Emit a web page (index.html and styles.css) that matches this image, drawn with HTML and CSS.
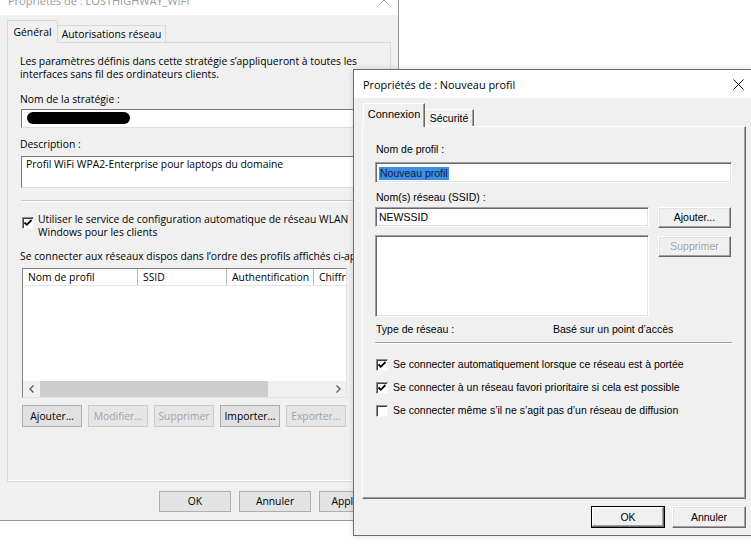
FILE: index.html
```html
<!DOCTYPE html>
<html lang="fr">
<head>
<meta charset="utf-8">
<title>Propriétés</title>
<link rel="stylesheet" href="styles.css">
</head>
<body>
<div class="desktop">
  <section class="win win1">
    <header class="titlebar tb1">
      <span class="title">Propriétés de : LOSTHIGHWAY_WIFI</span>
      <span class="close"><svg width="10" height="10" viewBox="0 0 10 10"><path d="M0.5 0.5 L9.5 9.5 M9.5 0.5 L0.5 9.5" stroke="#9a9a9a" stroke-width="1" fill="none"/></svg></span>
    </header>
    <div class="wbody b1">
      <div class="tabs t1">
        <div class="tab sel w-gen">Général</div>
        <div class="tab w-aut">Autorisations réseau</div>
      </div>
      <div class="panel p1">
        <p class="intro">Les paramètres définis dans cette stratégie s’appliqueront à toutes les<br>interfaces sans fil des ordinateurs clients.</p>
        <div class="lbl l-name">Nom de la stratégie :</div>
        <div class="field1 f-name"><span class="redact"></span></div>
        <div class="lbl l-desc">Description :</div>
        <div class="field1 f-desc">Profil WiFi WPA2-Enterprise pour laptops du domaine</div>
        <div class="sep sep1"></div>
        <div class="chkrow1">
          <span class="cb cb1"><svg width="10" height="10" viewBox="0 0 10 10"><path d="M1.5 4.5 L3.8 6.8 L8.5 2" stroke="#000" stroke-width="1.8" fill="none"/></svg></span>
          <span class="chktext">Utiliser le service de configuration automatique de réseau WLAN<br>Windows pour les clients</span>
        </div>
        <div class="lbl l-order">Se connecter aux réseaux dispos dans l’ordre des profils affichés ci-après :</div>
        <div class="listview">
          <div class="lvhead">
            <span class="col">Nom de profil</span>
            <span class="col">SSID</span>
            <span class="col">Authentification</span>
            <span class="col">Chiffrement</span>
          </div>
          <div class="lvbody"></div>
          <div class="hscroll">
            <span class="arr"><svg width="6" height="8" viewBox="0 0 6 8"><path d="M4.5 0.5 L1 4 L4.5 7.5" stroke="#606060" stroke-width="1.4" fill="none"/></svg></span>
            <span class="track"><span class="thumb"></span></span>
            <span class="arr"><svg width="6" height="8" viewBox="0 0 6 8"><path d="M1.5 0.5 L5 4 L1.5 7.5" stroke="#606060" stroke-width="1.4" fill="none"/></svg></span>
          </div>
        </div>
        <div class="btnrow">
          <span class="btn1">Ajouter…</span>
          <span class="btn1 dis">Modifier…</span>
          <span class="btn1 dis">Supprimer</span>
          <span class="btn1">Importer…</span>
          <span class="btn1 dis">Exporter…</span>
        </div>
      </div>
      <div class="footer f1">
        <span class="btn1 fb1">OK</span>
        <span class="btn1 fb1">Annuler</span>
        <span class="btn1 fb1">Appliquer</span>
      </div>
    </div>
  </section>

  <section class="win win2">
    <header class="titlebar tb2">
      <span class="title">Propriétés de : Nouveau profil</span>
      <span class="close close2"><svg width="11" height="11" viewBox="0 0 11 11"><path d="M0.5 0.5 L10.5 10.5 M10.5 0.5 L0.5 10.5" stroke="#000" stroke-width="1" fill="none"/></svg></span>
    </header>
    <div class="wbody b2">
      <div class="tabs t2">
        <div class="tab2 sel w-con">Connexion</div>
        <div class="tab2 w-sec">Sécurité</div>
      </div>
      <div class="panel p2">
        <div class="lbl2">Nom de profil :</div>
        <div class="field2 f-prof"><span class="hl">Nouveau profil</span></div>
        <div class="lbl2 l-ssid">Nom(s) réseau (SSID) :</div>
        <div class="row2 r-ssid">
          <div class="field2 f-ssid">NEWSSID</div>
          <span class="btn2">Ajouter...</span>
        </div>
        <div class="row2 r-list">
          <div class="field2 f-list"></div>
          <span class="btn2 dis2 b-sup">Supprimer</span>
        </div>
        <div class="typerow"><span class="tk">Type de réseau :</span><span>Basé sur un point d’accès</span></div>
        <div class="sep sep2"></div>
        <div class="chkrow2">
          <span class="cb cb2"><svg width="10" height="10" viewBox="0 0 10 10"><path d="M1.5 4.5 L3.8 6.8 L8.5 2" stroke="#000" stroke-width="1.8" fill="none"/></svg></span>
          <span>Se connecter automatiquement lorsque ce réseau est à portée</span>
        </div>
        <div class="chkrow2">
          <span class="cb cb2"><svg width="10" height="10" viewBox="0 0 10 10"><path d="M1.5 4.5 L3.8 6.8 L8.5 2" stroke="#000" stroke-width="1.8" fill="none"/></svg></span>
          <span>Se connecter à un réseau favori prioritaire si cela est possible</span>
        </div>
        <div class="chkrow2">
          <span class="cb cb2"></span>
          <span>Se connecter même s’il ne s’agit pas d’un réseau de diffusion</span>
        </div>
      </div>
      <div class="footer f2">
        <span class="btn2 def">OK</span>
        <span class="btn2">Annuler</span>
      </div>
    </div>
  </section>
</div>
</body>
</html>
```

FILE: styles.css
```css
html, body { margin: 0; padding: 0; background: #fff; }

.desktop {
  position: relative;
  width: 751px;
  height: 551px;
  overflow: hidden;
  background: #fff;
}

.win {
  position: absolute;
  box-sizing: border-box;
  display: flex;
  flex-direction: column;
  background: #f0f0f0;
  color: #000;
}

.titlebar {
  flex: none;
  display: flex;
  align-items: center;
  background: #fff;
}
.title { flex: 1; white-space: nowrap; }
.close { display: flex; align-items: center; justify-content: center; flex: none; }

.wbody { flex: 1; display: flex; flex-direction: column; min-height: 0; }

.tabs { flex: none; display: flex; align-items: flex-end; position: relative; z-index: 2; }

.panel { flex: 1; box-sizing: border-box; display: flex; flex-direction: column; min-height: 0; }

.footer { flex: none; display: flex; justify-content: flex-end; }

.sep { flex: none; height: 1px; }

.cb {
  flex: none;
  box-sizing: border-box;
  width: 12px;
  height: 12px;
  background: #fff;
  border: 1px solid;
  border-color: #8a8a8a #f4f4f4 #f4f4f4 #8a8a8a;
  box-shadow: inset 1px 1px 0 #404040;
  display: flex;
  align-items: center;
  justify-content: center;
}
.cb svg { display: block; }

/* ---------- Window 1 ---------- */
.win1 {
  left: -1px;
  top: -16px;
  width: 400px;
  height: 537px;
  border: 1px solid #9a9a9a;
  font: 10.35px/13px "Open Sans", "Noto Sans", sans-serif;
}
.tb1 { height: 30px; padding-left: 8px; }
.tb1 .title { color: #9a9a9a; font-size: 11px; }
.tb1 .close { width: 29px; }

.b1 { padding: 5px 7px 0 7px; }
.t1 { height: 22px; }
.tab {
  box-sizing: border-box;
  height: 17px;
  border: 1px solid #d9d9d9;
  border-bottom: none;
  background: #f0f0f0;
  display: flex;
  align-items: center;
  justify-content: center;
  white-space: nowrap;
}
.tab.sel { height: 23px; margin-bottom: -1px; background: #f0f0f0; }
.w-gen { width: 51px; }
.w-aut { width: 108px; border-left: none; }

.p1 {
  border: 1px solid #d9d9d9;
  box-shadow: inset 0 -1px 0 #fff;
  padding: 12px 12px 0 13px;
  overflow: hidden;
}
.intro { margin: 0 0 0 -1px; white-space: nowrap; }
.lbl { white-space: nowrap; margin-left: -1px; }
.l-name { margin-top: 12px; }
.l-desc { margin-top: 10px; }
.l-order { margin-top: 11px; }

.field1 {
  box-sizing: border-box;
  background: #fff;
  border: 1px solid;
  border-color: #7a7a7a #dcdcdc #dcdcdc #7a7a7a;
  margin-right: -20px;
  white-space: nowrap;
}
.f-name { margin-top: 3px; height: 19px; padding: 2px 0 0 5px; }
.redact { display: block; width: 103px; height: 12px; background: #000; border-radius: 6px; }
.f-desc { margin-top: 5px; height: 32px; padding: 1px 0 0 4px; }

.sep1 {
  margin-top: 12px;
  margin-right: -20px;
  background: #c9c9c9;
  box-shadow: 0 1px 0 #fff;
}

.chkrow1 { margin-top: 12px; display: flex; gap: 4px; margin-left: 1px; }
.cb1 { margin-top: 4px; }
.chktext { white-space: nowrap; }

.listview {
  flex: none;
  margin: 5px 0 0 1px;
  width: 325px;
  height: 130px;
  box-sizing: border-box;
  border: 1px solid;
  border-color: #828282 #e3e3e3 #e3e3e3 #828282;
  background: #fff;
  display: flex;
  flex-direction: column;
  overflow: hidden;
}
.lvhead {
  flex: none;
  height: 17px;
  display: grid;
  grid-template-columns: 115px 89px 87px 80px;
  border-bottom: 1px solid #e5e5e5;
  box-sizing: border-box;
}
.col {
  border-right: 1px solid #b8b8b8;
  padding-left: 5px;
  white-space: nowrap;
  overflow: hidden;
  line-height: 16px;
}
.lvbody { flex: 1; }
.hscroll {
  flex: none;
  height: 16px;
  display: flex;
  background: #f0f0f0;
}
.arr { width: 17px; display: flex; align-items: center; justify-content: center; }
.track { flex: 1; display: flex; }
.thumb { width: 228px; margin-left: 0; background: #cdcdcd; }

.btnrow { margin: 7px 0 0 1px; display: flex; gap: 6px; }
.btn1 {
  box-sizing: border-box;
  width: 60px;
  height: 22px;
  background: #e1e1e1;
  border: 1px solid #adadad;
  display: flex;
  align-items: center;
  justify-content: center;
  white-space: nowrap;
}
.btn1.dis { color: #a3a3a3; border-color: #cacaca; background: #e6e6e6; }

.f1 { gap: 8px; padding: 9px 0 8px; }
.fb1 { width: 72px; height: 21px; background: #e3e3e3; }

/* ---------- Window 2 ---------- */
.win2 {
  left: 353px;
  top: 69px;
  width: 402px;
  height: 467px;
  border: 1px solid #6e6e6e;
  font: 10.5px/13px "Liberation Sans", Arial, sans-serif;
  box-shadow: 0 0 6px rgba(0,0,0,0.15);
  z-index: 5;
}
.tb2 { height: 28px; padding-left: 9px; }
.tb2 .title { font: 10.9px/13px "Open Sans", "Noto Sans", sans-serif; }
.close2 { width: 32px; }

.b2 { padding: 5px 8px 0 8px; }
.t2 { height: 23px; }
.tab2 {
  box-sizing: border-box;
  height: 17px;
  border-top: 1px solid #fff;
  border-left: 1px solid #fff;
  border-right: 1px solid #696969;
  box-shadow: inset -1px 0 0 #a0a0a0;
  background: #f0f0f0;
  display: flex;
  align-items: center;
  justify-content: center;
  white-space: nowrap;
}
.tab2.sel { height: 24px; margin-bottom: -1px; padding-bottom: 2px; font-size: 11px; }
.w-con { width: 62px; margin-left: 1px; }
.w-sec { width: 49px; border-left: none; }

.p2 {
  border: 1px solid;
  border-color: #fff #696969 #696969 #fff;
  box-shadow: inset -1px -1px 0 #a0a0a0;
  padding: 16px 13px 0 12px;
}
.lbl2 { margin-left: 1px; white-space: nowrap; }
.l-ssid { margin-top: 8px; }

.field2 {
  box-sizing: border-box;
  background: #fff;
  border: 1px solid;
  border-color: #a0a0a0 #fff #fff #a0a0a0;
  box-shadow: inset 1px 1px 0 #696969, inset -1px -1px 0 #e3e3e3;
  white-space: nowrap;
}
.f-prof { margin-top: 6px; height: 21px; padding: 1px 0 0 3px; display: flex; align-items: center; }
.hl { background: #3d8ee0; color: #0c1d44; line-height: 13px; padding: 0 1px; }

.row2 { display: flex; gap: 9px; align-items: flex-start; }
.r-ssid { margin-top: 3px; }
.f-ssid { width: 274px; height: 20px; padding: 3px 0 0 3px; }
.r-list { margin-top: 7px; }
.f-list { width: 274px; height: 82px; }
.b-sup { margin-top: 1px; }

.btn2 {
  box-sizing: border-box;
  width: 73px;
  height: 21px;
  background: #f0f0f0;
  border: 1px solid;
  border-color: #fff #696969 #696969 #fff;
  box-shadow: inset -1px -1px 0 #a0a0a0, inset 1px 1px 0 #e3e3e3;
  display: flex;
  align-items: center;
  justify-content: center;
  white-space: nowrap;
}
.dis2 { color: #a0a0a0; text-shadow: 1px 1px 0 #fff; }

.typerow { margin-top: 6px; margin-left: 1px; display: flex; white-space: nowrap; }
.tk { width: 177px; }

.sep2 { margin-top: 6px; background: #a0a0a0; box-shadow: 0 1px 0 #fff; }

.chkrow2 { height: 23px; display: flex; align-items: center; gap: 5px; white-space: nowrap; margin-left: 1px; }
.sep2 + .chkrow2 { margin-top: 10px; }

.f2 { gap: 7px; padding: 7px 0 7px; }
.f2 .btn2 { width: 74px; height: 22px; }
.btn2.def {
  border: 1px solid #000;
  box-shadow: inset -1px -1px 0 #696969, inset 1px 1px 0 #fff, inset -2px -2px 0 #a0a0a0;
}
```
